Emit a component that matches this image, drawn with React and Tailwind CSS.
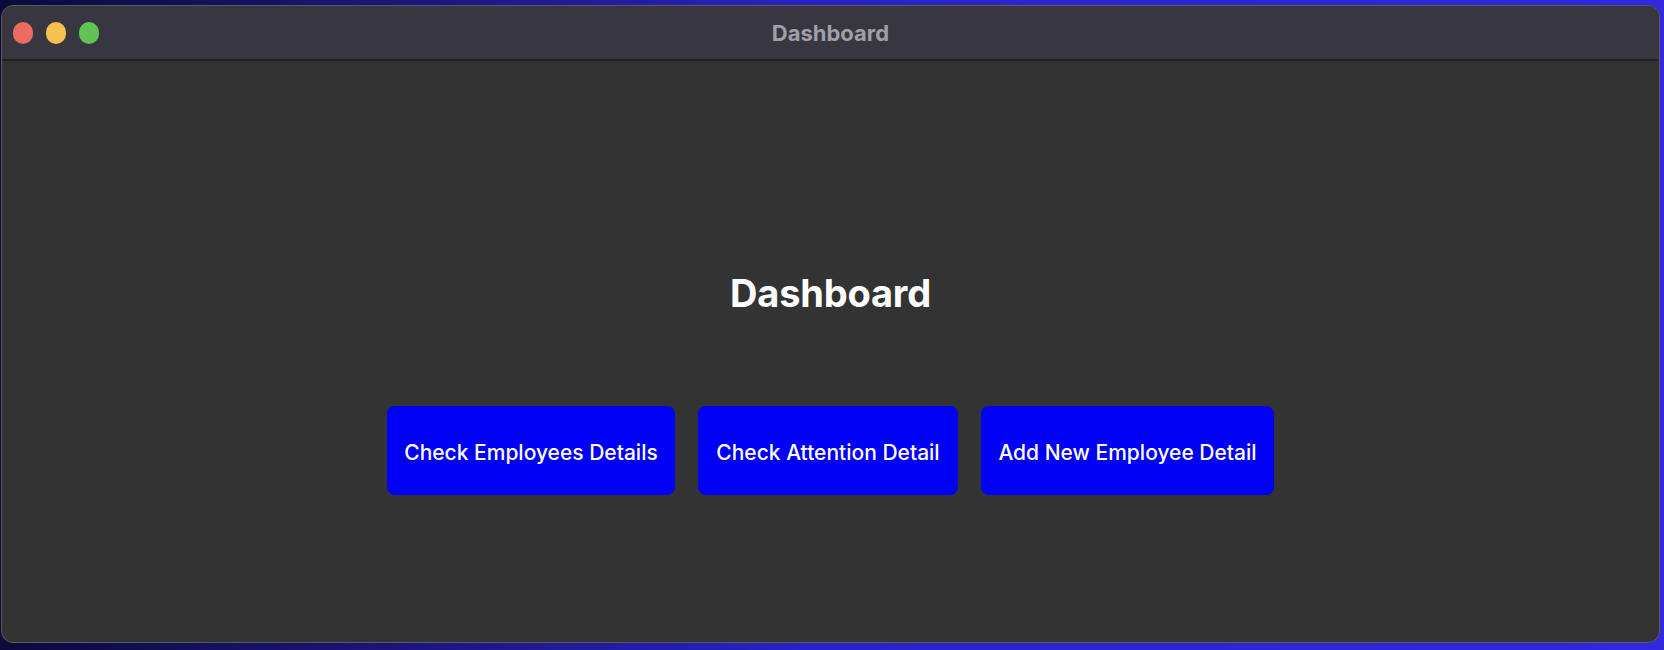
import React from 'react';

const buttons = [
  { label: 'Check Employees Details', width: 'w-[288px]' },
  { label: 'Check Attention Detail', width: 'w-[260px]' },
  { label: 'Add New Employee Detail', width: 'w-[293px]' },
];

const App = () => {
  return (
    <div className="w-[1664px] h-[650px] bg-gradient-to-r from-[#0c0a3a] via-[#2a22c8] to-[#3128e0] pt-[5px] pl-[1px] pr-[4px] pb-[7px] font-['Inter',sans-serif]">
      <div className="flex flex-col h-full rounded-[12px] border border-[#5a5a5c] overflow-hidden bg-[#333333]">
        {/* Title bar */}
        <div className="grid grid-cols-[1fr_auto_1fr] items-center h-[55px] bg-[#38363f] border-b-2 border-[#222224]">
          <div className="flex items-center gap-[13px] pl-[11px]">
            <span className="w-[20px] h-[22px] rounded-full bg-[#ec6b60]" />
            <span className="w-[20px] h-[22px] rounded-full bg-[#f5c250]" />
            <span className="w-[20px] h-[22px] rounded-full bg-[#60c454]" />
          </div>
          <div className="text-[22px] font-bold text-[#a09fa7] pt-[1px]">Dashboard</div>
          <div />
        </div>

        {/* Content */}
        <div className="flex-1 flex flex-col items-center pt-[208px]">
          <h1 className="text-[38px] leading-[48px] font-bold text-white tracking-[-0.2px]">Dashboard</h1>
          <div className="flex gap-[23px] mt-[89px]">
            {buttons.map((b) => (
              <button
                key={b.label}
                className={`${b.width} h-[89px] pt-[5px] rounded-[8px] bg-[#0000f5] text-white text-[21px] font-medium`}
              >
                {b.label}
              </button>
            ))}
          </div>
        </div>
      </div>
    </div>
  );
};

export default App;
